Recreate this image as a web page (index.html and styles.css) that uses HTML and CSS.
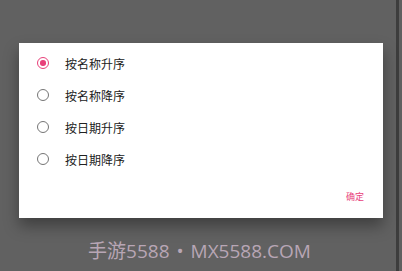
FILE: index.html
```html
<!DOCTYPE html>
<html lang="zh">
<head>
<meta charset="utf-8">
<link rel="stylesheet" href="styles.css">
</head>
<body>
<div class="screen">
  <div class="dialog">
    <div class="options">
      <div class="row"><span class="radio checked"></span><span class="label">按名称升序</span></div>
      <div class="row"><span class="radio"></span><span class="label">按名称降序</span></div>
      <div class="row"><span class="radio"></span><span class="label">按日期升序</span></div>
      <div class="row"><span class="radio"></span><span class="label">按日期降序</span></div>
    </div>
    <div class="actions"><span class="btn">确定</span></div>
  </div>
  <div class="watermark">手游5588 • MX5588.COM</div>
</div>
</body>
</html>
```
FILE: styles.css
```css
html, body {
  margin: 0;
  padding: 0;
}
body {
  width: 402px;
  height: 271px;
  overflow: hidden;
  background: #606060;
}
.screen {
  width: 399px;
  height: 271px;
  border-right: 3px solid #3d3d3d;
  background: #616161;
  display: flex;
  flex-direction: column;
  padding-top: 43px;
  box-sizing: border-box;
  font-family: Roboto, "Noto Sans CJK SC", sans-serif;
}
.dialog {
  margin-left: 19px;
  width: 364px;
  height: 175px;
  background: #ffffff;
  box-shadow: 0 8px 14px rgba(0,0,0,0.35);
  display: flex;
  flex-direction: column;
  box-sizing: border-box;
  padding-top: 4px;
}
.options {
  display: flex;
  flex-direction: column;
}
.row {
  height: 32px;
  display: flex;
  align-items: center;
  padding-left: 18px;
}
.radio {
  width: 12px;
  height: 12px;
  border: 1.6px solid #757575;
  border-radius: 50%;
  box-sizing: border-box;
  display: flex;
  align-items: center;
  justify-content: center;
}
.radio.checked {
  border-color: #e8407a;
}
.radio.checked::after {
  content: "";
  width: 5.5px;
  height: 5.5px;
  border-radius: 50%;
  background: #e8407a;
}
.label {
  margin-left: 16px;
  font-size: 12px;
  color: #212121;
  font-family: "Noto Sans CJK SC", sans-serif;
}
.actions {
  display: flex;
  justify-content: flex-end;
  padding-right: 19px;
  margin-top: 15px;
}
.btn {
  font-size: 9px;
  color: #e8407a;
  font-family: "Noto Sans CJK SC", sans-serif;
}
.watermark {
  margin-top: 18px;
  text-align: center;
  font-size: 19px;
  word-spacing: 2px;
  color: #b8a6b5;
  font-family: "Open Sans", "Noto Sans CJK SC", sans-serif;
  padding-left: 3px;
}
```
